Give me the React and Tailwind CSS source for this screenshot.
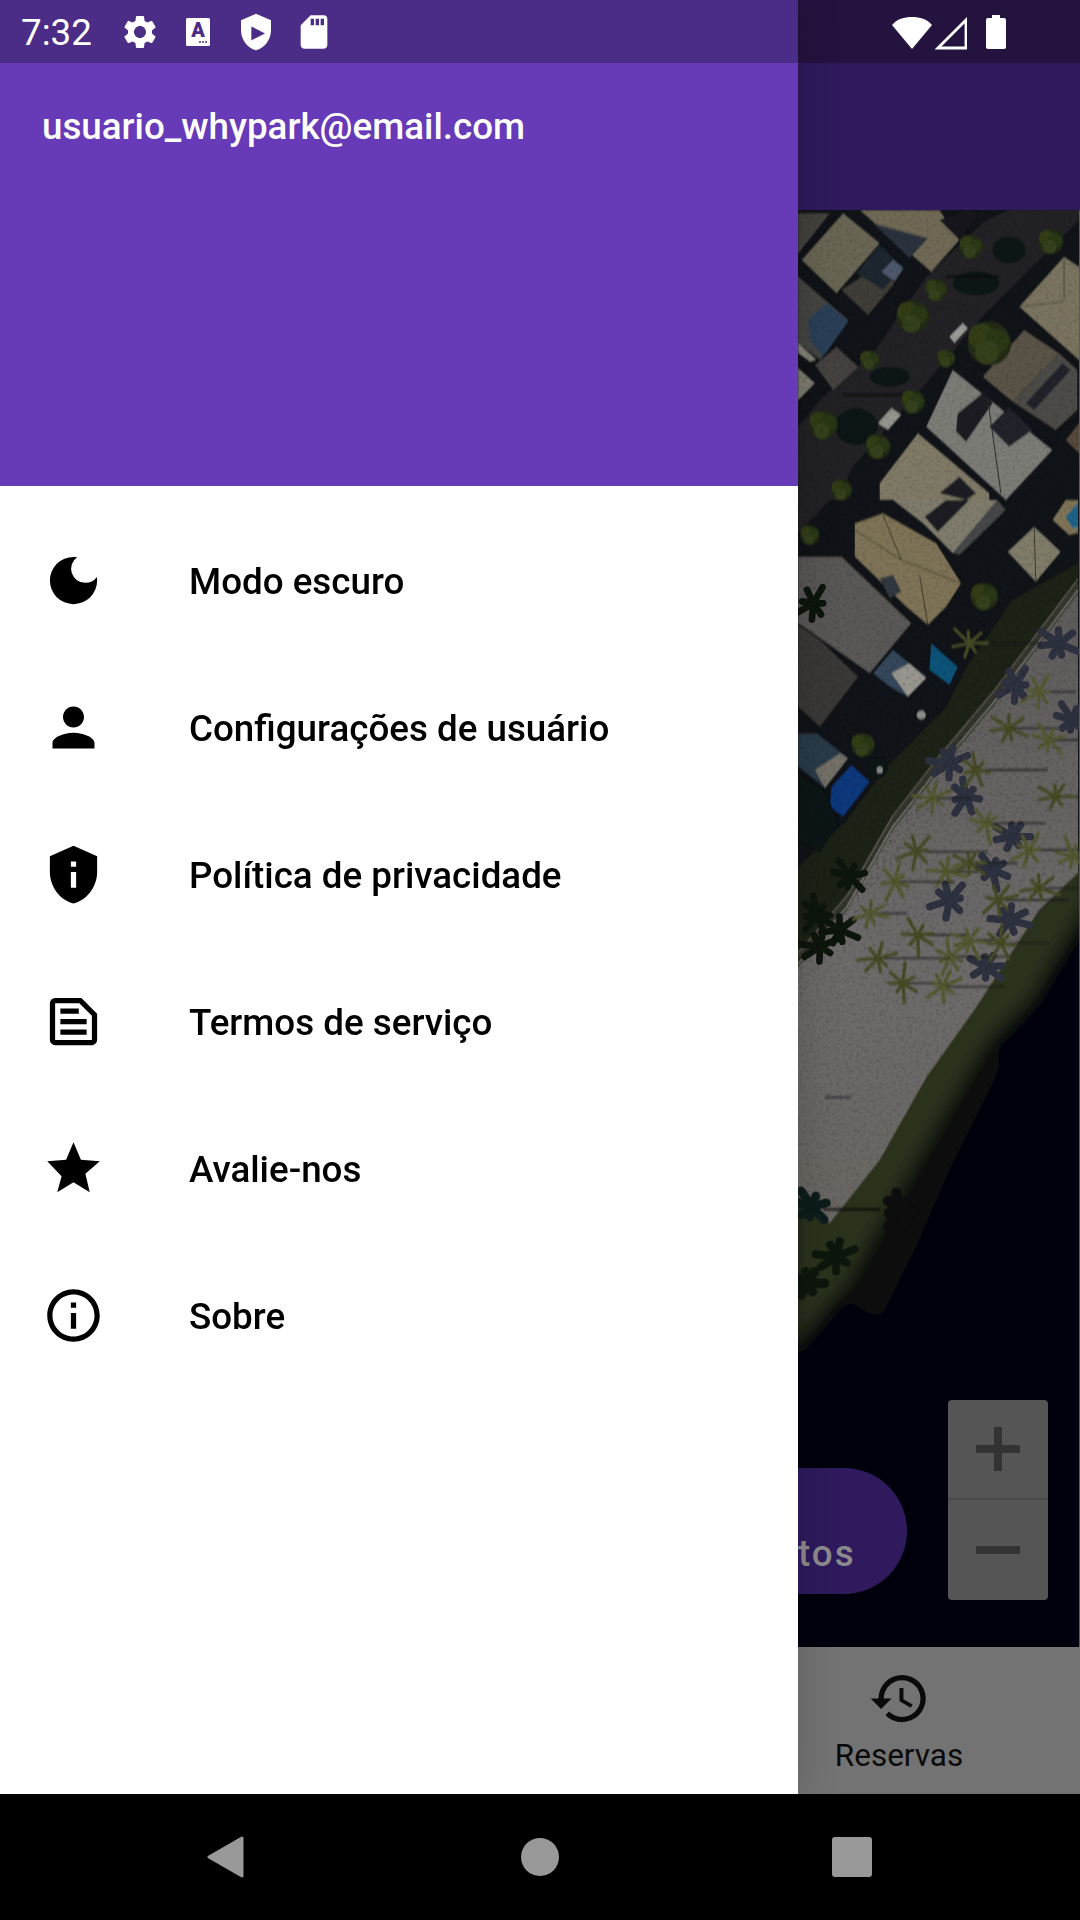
import { MdDarkMode, MdPerson, MdPrivacyTip, MdInfoOutline, MdHistory, MdSettings, MdSdCard } from 'react-icons/md';

function SummarizeIcon({ size, className }) {
  return (
    <svg width={size} height={size} viewBox="0 0 24 24" fill="currentColor" className={className}>
      <path fillRule="evenodd" d="M15 3H5a2 2 0 0 0-2 2v14a2 2 0 0 0 2 2h14a2 2 0 0 0 2-2V9zM5 19V5h9.2L19 9.8V19z" />
      <path d="M7 7h7v2H7zm0 4h10v2H7zm0 4h10v2H7z" />
    </svg>
  );
}

function StarIcon({ size, className }) {
  return (
    <svg width={size} height={size} viewBox="0 0 24 24" fill="currentColor" className={className}>
      <path d="M12 17.27 18.18 21l-1.64-7.03L22 9.24l-7.19-.61L12 2 9.19 8.63 2 9.24l5.46 5.73L5.82 21z" />
    </svg>
  );
}

const menuItems = [
  { label: 'Modo escuro', icon: MdDarkMode },
  { label: 'Configurações de usuário', icon: MdPerson },
  { label: 'Política de privacidade', icon: MdPrivacyTip },
  { label: 'Termos de serviço', icon: SummarizeIcon },
  { label: 'Avalie-nos', icon: StarIcon },
  { label: 'Sobre', icon: MdInfoOutline },
];

// Map shapes are written in "zoomed" coords: x = 780 + px / 3, y = offset + py / 3
const roofsTop = [
  ['620,660 690,630 900,630 900,660 600,960 430,1160 220,1400 170,1500 55,1500 55,1280 120,1200 280,1060 440,830', '#222326'],
  ['190,640 300,730 170,880 65,780', '#6b6655'],
  ['55,640 150,640 55,760', '#44433e'],
  ['185,870 290,800 345,850 265,945', '#403e38'],
  ['230,820 300,735 370,800 310,870', '#1f252d'],
  ['305,815 340,780 372,805 345,845', '#4e586c'],
  ['240,630 480,630 540,720 455,815 280,665', '#6f6955'],
  ['280,670 445,715 390,775', '#2b333d'],
  ['480,660 560,630 600,640 540,720', '#14171b'],
  ['55,830 205,960 120,1080 55,1030', '#454543'],
  ['85,960 140,910 205,965 130,1070 90,1020', '#2a4058'],
  ['55,1030 110,1080 90,1085 55,1060', '#858579'],
  ['105,1095 170,1040 235,1100 160,1170', '#45423f'],
  ['55,1105 105,1150 55,1200', '#7f7d70'],
  ['855,770 900,800 900,1080 720,920', '#79735f'],
  ['610,1130 735,990 840,1060 700,1205', '#5a5246'],
  ['700,1205 840,1060 895,1110 895,1230 830,1290', '#4e4b47'],
  ['740,1210 850,1090 875,1110 765,1230', '#20242a'],
  ['520,1110 820,1350 680,1500 440,1280', '#7c7c77'],
  ['535,1240 615,1175 640,1210 605,1260 560,1325 530,1295', '#1a1e24'],
  ['630,1280 690,1220 760,1290 690,1340', '#20232a'],
  ['415,1300 630,1480 630,1500 300,1500 300,1450', '#7f7966'],
  ['480,1480 540,1430 590,1480 560,1500', '#1a1e24'],
  ['900,1270 860,1320 900,1360', '#54493a'],
];

const treesTop = [
  [815, 725, 38], [575, 740, 36], [470, 870, 34], [400, 950, 50], [270, 1080, 30], [630, 1030, 66],
  [500, 1075, 28], [400, 1205, 36], [130, 1275, 44], [295, 1340, 38], [185, 1470, 32],
];

const roofsMid = [
  ['55,0 150,0 55,100', '#222326'],
  ['225,70 310,40 470,130 545,250 500,320 445,375 380,320 225,170', '#7e7356'],
  ['300,235 340,225 365,275 330,295', '#333840'],
  ['340,0 655,0 520,160 430,70', '#7f7b6d'],
  ['435,50 500,0 570,0 475,95', '#1a1e23'],
  ['655,0 680,30 540,165 520,160', '#44474a'],
  ['765,80 845,155 770,245 685,155', '#7f7b6a'],
  ['820,60 860,0 897,0 897,100 870,105', '#7e7356'],
  ['860,50 897,10 897,80 880,85', '#1a6488'],
  ['55,170 185,170 395,370 270,520 55,370', '#5a5857'],
  ['55,375 120,420 235,530 120,680 55,620', '#3b3937'],
  ['280,520 340,450 440,530 385,590 330,560', '#36475a'],
  ['335,520 390,490 440,535 385,590', '#98968f'],
  ['455,430 535,500 510,555 450,510', '#0e5279'],
  ['55,700 110,700 200,770 130,860 55,800', '#2b3a49'],
  ['105,810 180,760 205,775 135,865', '#747168'],
  ['155,860 215,795 270,845 190,950 150,920', '#0d377c'],
  ['55,820 140,880 175,970 120,1060 55,1020', '#0e1216'],
];

const ridges = [
  [310, 45, 365, 180], [225, 90, 365, 180], [545, 250, 365, 180], [445, 375, 420, 225], [395, 370, 185, 170],
  [765, 80, 770, 245],
];

const palms = [
  [780, 575], [690, 685], [810, 720], [590, 810], [460, 895], [830, 890], [620, 970], [410, 1055], [500, 1115],
  [570, 1090], [345, 1145], [655, 1200], [270, 1240], [415, 1305], [510, 1370], [295, 1375], [570, 1320],
  [370, 1450], [750, 1050], [780, 1165], [880, 1070], [665, 1330], [490, 1460], [570, 430],
];

const palmShadows = [
  [710, 555], [840, 430], [880, 660], [560, 890], [510, 790], [700, 1010], [640, 1110], [510, 1200], [690, 1260],
  [620, 1400],
];

const grassShadows = [[100, 310], [180, 1290], [210, 1130], [110, 1240], [120, 1340]];

function Leaves({ x, y, i, color, width, scale = 1 }) {
  const angles = [0, 55, 95, 150, 190, 245, 300];
  return angles.map(a => {
    const len = (30 + ((a * 7 + i * 29) % 34)) * scale;
    const rad = ((a + i * 23) * Math.PI) / 180;
    return (
      <line key={a} x1={x} y1={y} x2={x + Math.cos(rad) * len} y2={y + Math.sin(rad) * len} stroke={color} strokeWidth={width} strokeLinecap="round" />
    );
  });
}

function Tree({ x, y, r }) {
  return (
    <g>
      <circle cx={x} cy={y} r={r} fill="#222c14" />
      <circle cx={x - r * 0.35} cy={y - r * 0.3} r={r * 0.6} fill="#303d19" />
      <circle cx={x + r * 0.35} cy={y - r * 0.1} r={r * 0.55} fill="#2b3716" />
      <circle cx={x - r * 0.1} cy={y + r * 0.4} r={r * 0.55} fill="#34411b" />
    </g>
  );
}

function MapPicture() {
  return (
    <svg viewBox="798 210 282 1437" preserveAspectRatio="none" className="block h-full w-full">
      <defs>
        <filter id="soft"><feGaussianBlur stdDeviation="0.8" /></filter>
        <filter id="blob"><feGaussianBlur stdDeviation="2.2" /></filter>
        <filter id="shore"><feGaussianBlur stdDeviation="9" /></filter>
        <filter id="grain">
          <feTurbulence type="fractalNoise" baseFrequency="0.3" numOctaves="2" seed="4" />
          <feColorMatrix values="0 0 0 0 0  0 0 0 0 0  0 0 0 0 0  0 0 0 1.6 -0.72" />
        </filter>
        <linearGradient id="sand" x1="0" y1="0" x2="0" y2="1">
          <stop offset="0" stopColor="#5e5b5a" />
          <stop offset="0.6" stopColor="#6e6b6a" />
          <stop offset="1" stopColor="#6a6663" />
        </linearGradient>
        <clipPath id="upperClip">
          <polygon points="798,210 1080,210 1080,590 798,1000" />
        </clipPath>
        <clipPath id="sandClip">
          <polygon points="798,967 847,910 893,830 940,770 993,707 1079,593 1079,873 1040,910 977,1007 927,1077 880,1160 830,1223 798,1197" />
        </clipPath>
      </defs>
      <rect x="798" y="210" width="282" height="1437" fill="#101317" />
      <g filter="url(#soft)">
        {/* houses and the street */}
        <g transform="translate(780 0) scale(0.33333)">
          {roofsTop.map(([pts, fill]) => <polygon key={pts} points={pts} fill={fill} />)}
          <ellipse cx="690" cy="750" rx="50" ry="40" fill="#111316" />
          <ellipse cx="590" cy="850" rx="70" ry="36" fill="#111316" />
          <ellipse cx="230" cy="1280" rx="65" ry="55" fill="#111316" />
          <ellipse cx="330" cy="1130" rx="60" ry="30" fill="#111316" />
          <line x1="190" y1="1185" x2="370" y2="1185" stroke="#0c0e10" strokeWidth="8" />
          <line x1="500" y1="830" x2="660" y2="830" stroke="#0c0e10" strokeWidth="7" />
          {treesTop.map(([x, y, r]) => <Tree key={x + '-' + y} x={x} y={y} r={r} />)}
          <polygon points="510,1010 550,970 565,985 525,1028" fill="#9a9a96" />
          <polygon points="295,1270 335,1225 365,1245 325,1290" fill="#95958f" />
          <line x1="625" y1="1195" x2="665" y2="1480" stroke="#2a2a28" strokeWidth="3" />
          <line x1="855" y1="770" x2="855" y2="900" stroke="#4a4638" strokeWidth="3" />
          <line x1="855" y1="905" x2="720" y2="920" stroke="#4a4638" strokeWidth="3" />
        </g>
        {/* strip of grass left of the road */}
        <polygon points="1079,563 1013,600 967,667 947,707 887,767 847,820 798,867 798,1200 1079,800" fill="#1f2419" />
        <g transform="translate(780 500) scale(0.33333)">
          {roofsMid.map(([pts, fill]) => <polygon key={pts} points={pts} fill={fill} />)}
          {ridges.map(([x1, y1, x2, y2]) => <line key={x1 + '-' + y1} x1={x1} y1={y1} x2={x2} y2={y2} stroke="#3f3a2c" strokeWidth="3" />)}
          <Tree x={615} y={290} r={42} />
          <Tree x={250} y={735} r={36} />
          <Tree x={90} y={105} r={30} />
          <circle cx="295" cy="805" r="30" fill="#0f1316" />
          <circle cx="425" cy="645" r="14" fill="#8a8d88" />
          <circle cx="300" cy="810" r="10" fill="#85887f" />
        </g>
      </g>
      {/* water and the shore, soft edges */}
      <g filter="url(#shore)">
        <polygon points="790,1170 1090,840 1090,930 1030,1000 987,1043 913,1167 847,1283 790,1350" fill="#2a301d" />
        <polygon points="790,1350 847,1283 913,1167 987,1043 1030,1000 1090,900 1090,1660 790,1660" fill="#03030a" />
        <polygon points="847,1300 913,1185 990,1060 1010,1050 950,1170 915,1250 880,1320" fill="#0f0c0b" />
      </g>
      <g filter="url(#soft)">
        <polygon points="798,967 847,910 893,830 940,770 993,707 1079,593 1079,873 1040,910 977,1007 927,1077 880,1160 830,1223 798,1197" fill="url(#sand)" />
        <polyline points="798,958 847,901 893,821 940,761 993,698 1079,584" fill="none" stroke="#35362f" strokeWidth="4" />
        <polyline points="798,964 847,907 893,827 940,767 993,704 1079,590" fill="none" stroke="#86867f" strokeWidth="1.5" />
        <polyline points="798,953 847,896 893,816 940,756 993,693 1079,579" fill="none" stroke="#6b6b62" strokeWidth="1.2" />
      </g>
      {/* palm shadows */}
      <g filter="url(#blob)" transform="translate(780 500) scale(0.33333)">
        {palmShadows.map(([x, y], i) => <Leaves key={x + '-' + y} x={x} y={y} i={i} color="#2d3140" width={22} />)}
        {grassShadows.map(([x, y], i) => <Leaves key={x + '-' + y} x={x} y={y} i={i} color="#0f130f" width={20} />)}
      </g>
      <g filter="url(#soft)">
        <g transform="translate(780 500) scale(0.33333)">
          {palms.map(([x, y], i) => (
            <g key={x + '-' + y}>
              <line x1={x} y1={y} x2={x + 110 + (i % 4) * 35} y2={y} stroke="#18191c" strokeWidth="4" />
              <Leaves x={x} y={y} i={i} color={i % 2 ? '#464b25' : '#53582f'} width={10} />
            </g>
          ))}
        </g>
        <g transform="translate(780 1000) scale(0.33333)">
          <line x1="135" y1="292" x2="215" y2="292" stroke="#22252a" strokeWidth="4" />
          <line x1="130" y1="628" x2="300" y2="628" stroke="#0c0d0e" strokeWidth="5" />
        </g>
      </g>
      <g filter="url(#blob)" transform="translate(780 1000) scale(0.33333)">
        <Leaves x={95} y={620} i={2} color="#0f1c1c" width={26} />
        <Leaves x={360} y={630} i={3} color="#0a0b0e" width={30} />
        <Leaves x={170} y={770} i={4} color="#0d1810" width={24} />
        <Leaves x={80} y={850} i={5} color="#0d1810" width={28} />
      </g>
      {/* photo noise */}
      <rect x="798" y="590" width="282" height="640" fill="#000" filter="url(#grain)" clipPath="url(#sandClip)" opacity="0.2" />
      <rect x="798" y="210" width="282" height="790" fill="#000" filter="url(#grain)" clipPath="url(#upperClip)" opacity="0.18" />
    </svg>
  );
}

function AccessibilityIcon() {
  return (
    <svg width="40" height="40" viewBox="0 0 40 40">
      <rect x="8" y="6" width="24" height="28" rx="1.5" fill="#fff" />
      <text x="20" y="25" textAnchor="middle" fontFamily="Roboto" fontWeight="900" fontSize="20" fill="#4b2c87">A</text>
      <circle cx="22" cy="30" r="1" fill="#4b2c87" />
      <circle cx="25" cy="30" r="1" fill="#4b2c87" />
      <circle cx="28" cy="30" r="1" fill="#4b2c87" />
    </svg>
  );
}

function ShieldPlayIcon() {
  return (
    <svg width="40" height="40" viewBox="0 0 24 24" fill="#fff">
      <path fillRule="evenodd" d="M12 1 3 5v6c0 5.55 3.84 10.74 9 12 5.16-1.26 9-6.45 9-12V5zM9.2 8.7V17l8.2-4.15z" />
    </svg>
  );
}

export default function App() {
  return (
    <div className="flex h-[1920px] w-[1080px] flex-col overflow-hidden bg-black font-['Roboto',sans-serif]">
      <div className="flex min-h-0 flex-1">
        {/* Drawer */}
        <aside className="relative z-10 flex w-[798px] shrink-0 flex-col bg-white shadow-[0_0_40px_rgba(0,0,0,0.18)]">
          <div className="flex h-[63px] shrink-0 items-center bg-[#4b2c87] pl-[21px] text-white">
            <span className="mt-[3px] w-[71px] text-[36.75px] leading-none">7:32</span>
            <div className="ml-[28px] flex items-center gap-[18px]">
              <MdSettings size={40} />
              <AccessibilityIcon />
              <ShieldPlayIcon />
              <MdSdCard size={40} />
            </div>
          </div>
          <div className="h-[423px] shrink-0 bg-[#673ab7] px-[42px] pt-[40px]">
            <p className="text-[36.75px] leading-[48px] font-medium text-white">usuario_whypark@email.com</p>
          </div>
          <nav className="pt-[21px]">
            {menuItems.map(item => (
              <div key={item.label} className="flex h-[147px] items-center pl-[42px] text-black">
                <item.icon size={63} className="shrink-0" />
                <span className="mt-[2px] ml-[84px] text-[36.75px] font-medium">{item.label}</span>
              </div>
            ))}
          </nav>
        </aside>

        {/* Screen behind the drawer, dimmed */}
        <div className="flex min-w-0 flex-1 flex-col">
          <div className="flex h-[63px] shrink-0 items-center justify-end bg-[#24123f] pr-[74px]">
            <svg className="mb-[2px]" width="40" height="36" viewBox="0 0 40 36">
              <path d="M0 12C5 6 12 4 20 4s15 2 20 8L20 36z" fill="#fff" />
            </svg>
            <svg className="ml-[3px]" width="32" height="36" viewBox="0 0 32 36">
              <path d="M31 6v28H3z" fill="none" stroke="#fff" strokeWidth="2.8" />
            </svg>
            <svg className="ml-[19px]" width="20" height="36" viewBox="0 0 20 36">
              <path d="M6 1h8v3h4a2 2 0 0 1 2 2v27a2 2 0 0 1-2 2H2a2 2 0 0 1-2-2V6a2 2 0 0 1 2-2h4z" fill="#fff" />
            </svg>
          </div>
          <div className="h-[147px] shrink-0 bg-[#2e1a5c]" />
          <div className="relative min-h-0 flex-1 border-r border-[#5a5a5a]">
            <MapPicture />
            <div className="absolute bottom-[53px] left-0 flex h-[126px] w-[109px] items-end rounded-r-[63px] bg-[#2e1a5c] pb-[20px]">
              <span className="text-[36.75px] leading-[40px] font-medium tracking-[2px] text-[#8c8a8c]">tos</span>
            </div>
            <div className="absolute right-[31px] bottom-[47px] flex h-[200px] w-[100px] flex-col rounded-[4px] bg-[#555555]">
              <div className="flex h-[100px] items-center justify-center border-b-2 border-[#4b4b4b]">
                <svg width="44" height="44" viewBox="0 0 44 44" fill="#333"><path d="M18 0h8v18h18v8H26v18h-8V26H0v-8h18z" /></svg>
              </div>
              <div className="flex h-[100px] items-center justify-center">
                <svg width="44" height="8" viewBox="0 0 44 8" fill="#333"><rect width="44" height="8" /></svg>
              </div>
            </div>
          </div>
          <div className="h-[147px] shrink-0 bg-[#737373]">
            <div className="flex w-[202px] flex-col items-center pt-[20px] text-[#0a0a0a]">
              <MdHistory size={63} />
              <span className="mt-[6px] text-[31.5px] leading-[40px]">Reservas</span>
            </div>
          </div>
        </div>
      </div>

      {/* Android nav bar */}
      <div className="flex h-[126px] shrink-0 items-center bg-black pl-[207px]">
        <svg width="37" height="42" viewBox="0 0 37 42">
          <path d="M35 2 2 21l33 19z" fill="#999" stroke="#999" strokeWidth="3" strokeLinejoin="round" />
        </svg>
        <div className="ml-[277px] h-[38px] w-[38px] rounded-full bg-[#999999]" />
        <div className="ml-[273px] h-[40px] w-[40px] rounded-[3px] bg-[#999999]" />
      </div>
    </div>
  );
}
